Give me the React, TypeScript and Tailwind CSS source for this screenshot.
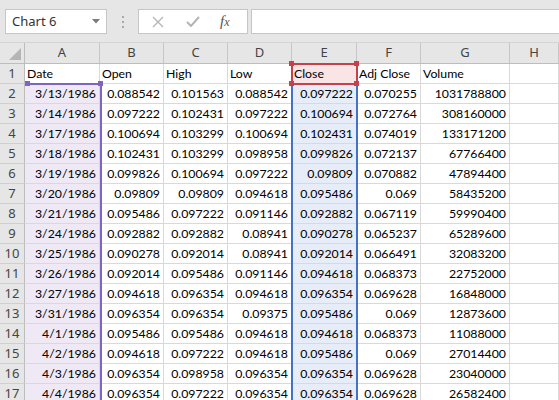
import React from 'react';

const COLUMNS = ['A', 'B', 'C', 'D', 'E', 'F', 'G', 'H'];

const ROWS: string[][] = [
    ['Date', 'Open', 'High', 'Low', 'Close', 'Adj Close', 'Volume'],
    ['3/13/1986', '0.088542', '0.101563', '0.088542', '0.097222', '0.070255', '1031788800'],
    ['3/14/1986', '0.097222', '0.102431', '0.097222', '0.100694', '0.072764', '308160000'],
    ['3/17/1986', '0.100694', '0.103299', '0.100694', '0.102431', '0.074019', '133171200'],
    ['3/18/1986', '0.102431', '0.103299', '0.098958', '0.099826', '0.072137', '67766400'],
    ['3/19/1986', '0.099826', '0.100694', '0.097222', '0.09809', '0.070882', '47894400'],
    ['3/20/1986', '0.09809', '0.09809', '0.094618', '0.095486', '0.069', '58435200'],
    ['3/21/1986', '0.095486', '0.097222', '0.091146', '0.092882', '0.067119', '59990400'],
    ['3/24/1986', '0.092882', '0.092882', '0.08941', '0.090278', '0.065237', '65289600'],
    ['3/25/1986', '0.090278', '0.092014', '0.08941', '0.092014', '0.066491', '32083200'],
    ['3/26/1986', '0.092014', '0.095486', '0.091146', '0.094618', '0.068373', '22752000'],
    ['3/27/1986', '0.094618', '0.096354', '0.094618', '0.096354', '0.069628', '16848000'],
    ['3/31/1986', '0.096354', '0.096354', '0.09375', '0.095486', '0.069', '12873600'],
    ['4/1/1986', '0.095486', '0.095486', '0.094618', '0.094618', '0.068373', '11088000'],
    ['4/2/1986', '0.094618', '0.097222', '0.094618', '0.095486', '0.069', '27014400'],
    ['4/3/1986', '0.096354', '0.098958', '0.096354', '0.096354', '0.069628', '23040000'],
    ['4/4/1986', '0.096354', '0.097222', '0.096354', '0.096354', '0.069628', '26582400'],
];

const cellFont = { fontFamily: 'Lato, "Liberation Sans", sans-serif' };
const uiFont = { fontFamily: '"Noto Sans", "Open Sans", sans-serif' };

// background for the chart data ranges
function cellBg(row: number, col: number) {
    if (col === 0 && row > 0) return 'bg-[#eee9f5]';
    if (col === 4 && row === 0) return 'bg-[#f9e5e6]';
    if (col === 4 && row > 0) return 'bg-[#e6edf8]';
    return 'bg-white';
}

const Handle: React.FC<{ className: string }> = ({ className }) => (
    <div className={`absolute w-[5px] h-[5px] ${className}`} />
);

export default function App() {
    return (
        <div className="w-[559px] h-[400px] overflow-hidden bg-white select-none">

            {/* Name box + formula bar */}
            <div className="h-[43px] bg-[#e6e6e6] border-b border-[#d4d4d4] flex items-start pt-[9px] pl-[5px]">
                <div className="w-[102px] h-[25px] bg-white border border-[#c6c6c6] flex items-center justify-between pl-[6px] pr-[6px]">
                    <span className="text-[13px] text-[#333]" style={uiFont}>Chart 6</span>
                    <svg width="8" height="5" viewBox="0 0 8 5"><path d="M0 0h8L4 4.5z" fill="#7a7a7a" /></svg>
                </div>
                <div className="w-[31px] h-[25px] flex flex-col items-center justify-center gap-[3px]">
                    <div className="w-[2px] h-[2px] bg-[#a8a8a8]" />
                    <div className="w-[2px] h-[2px] bg-[#a8a8a8]" />
                    <div className="w-[2px] h-[2px] bg-[#a8a8a8]" />
                </div>
                <div className="w-[110px] h-[25px] bg-white border border-[#c6c6c6] flex items-center">
                    <svg className="ml-[13px]" width="12" height="12" viewBox="0 0 12 12">
                        <path d="M1 1l10 10M11 1L1 11" stroke="#b4b4b4" strokeWidth="1.3" />
                    </svg>
                    <svg className="ml-[22px]" width="14" height="11" viewBox="0 0 14 11">
                        <path d="M1 6l4 4L13 1" stroke="#b4b4b4" strokeWidth="2" fill="none" />
                    </svg>
                    <span className="ml-[20px] text-[15px] italic text-[#555] leading-none" style={{ fontFamily: '"Liberation Serif", serif' }}>
                        f<span className="text-[12px]">x</span>
                    </span>
                </div>
                <div className="ml-[3px] flex-1 h-[25px] bg-white border border-[#c6c6c6] border-r-0" />
            </div>

            {/* Sheet */}
            <div className="relative">
                <div className="grid grid-cols-[25px_75px_64px_64px_64px_65px_64px_89px_1fr]">
                    {/* corner */}
                    <div className="h-[21px] bg-[#e6e6e6] border-r border-b border-[#bdbdbd] relative">
                        <svg className="absolute right-[3px] bottom-[3px]" width="12" height="12" viewBox="0 0 12 12">
                            <path d="M12 0v12H0z" fill="#b5b5b5" />
                        </svg>
                    </div>
                    {COLUMNS.map(c => (
                        <div
                            key={c}
                            className="h-[21px] bg-[#e6e6e6] border-r border-b border-[#c6c6c6] border-b-[#bdbdbd] flex items-center justify-center text-[13px] text-[#444]"
                            style={uiFont}
                        >
                            {c}
                        </div>
                    ))}

                    {ROWS.map((row, r) => (
                        <React.Fragment key={r}>
                            <div
                                className="h-[20px] bg-[#e6e6e6] border-r border-b border-[#cfcfcf] border-r-[#bdbdbd] flex items-center justify-center text-[13px] text-[#444]"
                                style={uiFont}
                            >
                                {r + 1}
                            </div>
                            {COLUMNS.map((_, c) => (
                                <div
                                    key={c}
                                    className={`h-[20px] border-r border-b border-[#d9d9d9] flex items-center pt-[2px] text-[12.3px] text-black whitespace-nowrap overflow-visible ${cellBg(r, c)} ${r === 0 ? 'justify-start pl-[2px]' : 'justify-end pr-[3px]'}`}
                                    style={cellFont}
                                >
                                    {row[c] ?? ''}
                                </div>
                            ))}
                        </React.Fragment>
                    ))}
                </div>

                {/* Chart range highlights */}
                <div className="absolute left-[26px] top-[40px] w-[76px] h-[400px] border-t-2 border-r-2 border-[#8064c4] pointer-events-none" />
                <Handle className="left-[25px] top-[38px] bg-[#8064c4]" />
                <Handle className="left-[98px] top-[38px] bg-[#8064c4]" />

                <div className="absolute left-[291px] top-[41px] w-[67px] h-[400px] border-l-2 border-r-2 border-[#4472c4] pointer-events-none" />

                <div className="absolute left-[291px] top-[20px] w-[67px] h-[22px] border-2 border-[#c5424a] pointer-events-none" />
                <Handle className="left-[289px] top-[18px] bg-[#c5424a]" />
                <Handle className="left-[354px] top-[18px] bg-[#c5424a]" />
                <Handle className="left-[289px] top-[38px] bg-[#c5424a]" />
                <Handle className="left-[354px] top-[38px] bg-[#c5424a]" />
            </div>
        </div>
    );
}
